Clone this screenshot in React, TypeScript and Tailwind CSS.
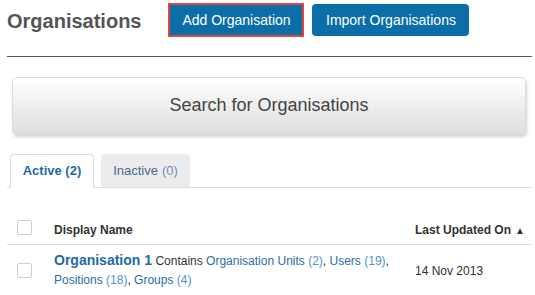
import React from "react";

const links = [
  { label: "Organisation Units", count: 2 },
  { label: "Users", count: 19 },
  { label: "Positions", count: 18 },
  { label: "Groups", count: 4 },
];

function Checkbox() {
  return <span className="block w-[15px] h-[15px] border border-[#cfcfcf] rounded-[2px] bg-white" />;
}

export default function App() {
  return (
    <div className="w-[535px] h-[295px] overflow-hidden bg-white pl-[7px] pr-[3px] font-['Liberation_Sans',Arial,sans-serif] text-[#333]">
      {/* header */}
      <div className="flex items-start h-[40px]">
        <h1 className="mt-[10px] text-[20px] leading-[23px] font-bold text-[#555]">Organisations</h1>
        <button className="ml-[27px] mt-[3px] h-[34px] w-[136px] border-2 border-[#e0443c] bg-[#0b6ea8] text-white text-[14px]">
          Add Organisation
        </button>
        <button className="ml-[8px] mt-[4px] h-[32px] w-[157px] rounded-[4px] bg-[#0b6ea8] text-white text-[14px]">
          Import Organisations
        </button>
      </div>

      <div className="mt-[16px] border-t border-[#555]" />

      {/* search */}
      <div className="mt-[20px] ml-[5px] mr-[6px] h-[58px] flex items-center justify-center pb-[2px] rounded-[5px] border border-[#dcdcdc] bg-gradient-to-b from-white to-[#dedede] shadow-[1px_2px_3px_rgba(0,0,0,0.18)] text-[18px] text-[#444]">
        Search for Organisations
      </div>

      {/* tabs */}
      <div className="mt-[19px] flex items-end border-b border-[#ddd] pl-[3px] text-[13px]">
        <div className="-mb-px w-[84px] h-[34px] flex items-center justify-center rounded-t-[4px] border border-[#ddd] border-b-white bg-white font-bold text-[#1f6aa5]">
          Active (2)
        </div>
        <div className="ml-[7px] w-[89px] h-[33px] flex items-center justify-center rounded-t-[4px] bg-[#ececec] text-[#466a95]">
          Inactive <span className="ml-[4px] text-[#6a8fbf]">(0)</span>
        </div>
      </div>

      {/* table */}
      <div className="mt-[24px] text-[12px]">
        <div className="grid grid-cols-[47px_361px_1fr] items-end h-[33px] pb-[6px] border-b border-[#ddd] font-bold leading-[15px]">
          <div className="pl-[10px] mb-[3px]">
            <Checkbox />
          </div>
          <div>Display Name</div>
          <div className="flex items-center gap-[4px]">
            Last Updated On <span className="text-[10px]">▲</span>
          </div>
        </div>
        <div className="grid grid-cols-[47px_361px_1fr] items-center pt-[6px] pb-[4px]">
          <div className="pl-[10px]">
            <Checkbox />
          </div>
          <div className="leading-[19px] pr-[6px]">
            <a className="text-[14px] font-bold text-[#1f6aa5]">Organisation 1</a>{" "}
            <span>Contains</span>{" "}
            {links.map((l, i) => (
              <span key={l.label}>
                <a className="text-[#2b6ca6]">
                  {l.label} <span className="text-[#4f93cc]">({l.count})</span>
                </a>
                {i < links.length - 1 ? ", " : ""}
              </span>
            ))}
          </div>
          <div className="text-[#2f2f3a]">14 Nov 2013</div>
        </div>
      </div>
    </div>
  );
}
